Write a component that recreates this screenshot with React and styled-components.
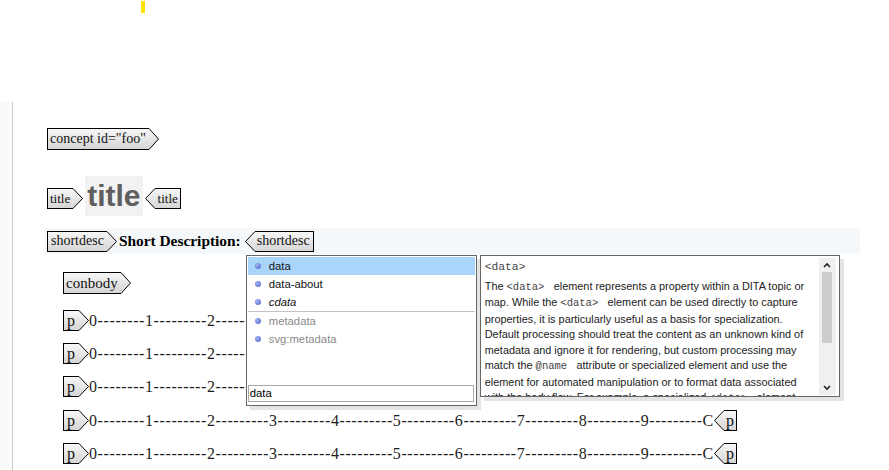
import { useId } from "react";
import styled, { createGlobalStyle } from "styled-components";

const GlobalStyle = createGlobalStyle`
  html, body { margin: 0; padding: 0; background: #fff; }
  body { width: 889px; height: 470px; overflow: hidden; font-family: "Liberation Serif", serif; }
`;

const Page = styled.div`
  display: flex;
  flex-direction: column;
  height: 470px;
`;

const TopArea = styled.div`
  flex: none;
  height: 102px;
`;

const Caret = styled.div`
  margin: 1px 0 0 141px;
  width: 4px;
  height: 12px;
  background: #ffe400;
`;

const Editor = styled.div`
  flex: 1;
  display: flex;
  min-height: 0;
`;

const Gutter = styled.div`
  flex: none;
  width: 12px;
  background: #fafafa;
  border-right: 1px solid #cbcbcb;
`;

const Content = styled.div`
  flex: 1;
  padding: 26px 0 0 32px;
  display: flex;
  flex-direction: column;
`;

const Row = styled.div`
  display: flex;
  align-items: ${(p) => p.$align || "center"};
  padding-left: ${(p) => 2 + (p.$indent || 0)}px;
  margin-top: ${(p) => p.$gap || 0}px;
  height: ${(p) => p.$h}px;
`;

const Band = styled(Row)`
  width: 815px;
  background: #f5f8fb;
  box-sizing: border-box;
`;

const TagWrap = styled.span`
  display: inline-flex;
  flex-direction: ${(p) => (p.$end ? "row-reverse" : "row")};
  height: ${(p) => p.$h}px;
  flex: none;
  margin-bottom: ${(p) => p.$mb || 0}px;
`;

const TagBox = styled.span`
  display: flex;
  align-items: center;
  box-sizing: border-box;
  height: 100%;
  padding: ${(p) => p.$pad};
  border: 1px solid #000;
  ${(p) => (p.$end ? "border-left: none;" : "border-right: none;")}
  background: linear-gradient(to bottom, #f7f7f7, #d5d5d5);
  font-family: "Liberation Serif", serif;
  font-size: ${(p) => p.$fs}px;
  color: #111;
  white-space: nowrap;
`;

function Tag({ children, end, h = 21, fs = 14, pad = "0 3px 0 2px", mb }) {
  const id = useId();
  const mid = h / 2;
  const d = end
    ? `M10 0.5 L0.5 ${mid} L10 ${h - 0.5}`
    : `M0 0.5 L9.5 ${mid} L0 ${h - 0.5}`;
  return (
    <TagWrap $end={end} $h={h} $mb={mb}>
      <TagBox $end={end} $fs={fs} $pad={pad}>
        {children}
      </TagBox>
      <svg width="10" height={h} style={{ display: "block" }}>
        <defs>
          <linearGradient id={id} x1="0" y1="0" x2="0" y2="1">
            <stop offset="0" stopColor="#f7f7f7" />
            <stop offset="1" stopColor="#d5d5d5" />
          </linearGradient>
        </defs>
        <path d={d + " Z"} fill={`url(#${id})`} />
        <path d={d} fill="none" stroke="#000" strokeWidth="1" />
      </svg>
    </TagWrap>
  );
}

const TitleText = styled.span`
  height: 40px;
  line-height: 40px;
  padding: 0 2px;
  margin: 0 2px;
  background: #f2f2f2;
  font-family: "Liberation Sans", sans-serif;
  font-weight: bold;
  font-size: 30px;
  color: #5f5f5f;
`;

const Label = styled.span`
  margin: 0 4px 0 2px;
  font-family: "Liberation Serif", serif;
  font-weight: bold;
  font-size: 15.4px;
  color: #000;
`;

const Anchor = styled.span`
  position: relative;
  display: inline-flex;
`;

const Popups = styled.div`
  position: absolute;
  top: calc(100% + 3px);
  left: 1px;
  display: flex;
  align-items: flex-start;
  gap: 3px;
  z-index: 2;
`;

const ListBox = styled.div`
  width: 231px;
  height: 151px;
  box-sizing: border-box;
  border: 1px solid #666;
  background: #fff;
  box-shadow: 4px 4px 0 #e4e4e4;
  padding: 1px;
  display: flex;
  flex-direction: column;
  font-family: "Liberation Sans", sans-serif;
  font-size: 11.3px;
`;

const Item = styled.div`
  height: 18px;
  display: flex;
  align-items: center;
  padding-left: 7px;
  gap: 8px;
  background: ${(p) => (p.$selected ? "#a9d5fb" : "transparent")};
  color: ${(p) => (p.$dim ? "#8a8a8a" : "#111")};
  font-style: ${(p) => (p.$italic ? "italic" : "normal")};
`;

const Bullet = styled.span`
  width: 6px;
  height: 6px;
  border-radius: 50%;
  background: radial-gradient(circle at 35% 35%, #a3b3f0, #4a60c8);
  flex: none;
`;

const Separator = styled.div`
  height: 1px;
  background: #c2c2c2;
`;

const Filler = styled.div`
  flex: 1;
`;

const FilterInput = styled.div`
  height: 17px;
  box-sizing: border-box;
  margin: 0 1px 2px 0;
  border: 1px solid #a8a8a8;
  padding-left: 1px;
  line-height: 15px;
  color: #000;
`;

const DocBox = styled.div`
  width: 360px;
  height: 142px;
  box-sizing: border-box;
  border: 1px solid #666;
  background: #fff;
  box-shadow: 4px 4px 0 #e4e4e4;
  display: flex;
`;

const DocText = styled.div`
  flex: 1;
  overflow: hidden;
  padding: 4px 0 0 4px;
  font-family: "Liberation Sans", sans-serif;
  font-size: 10.9px;
  color: #222;
`;

const DocTitle = styled.div`
  font-family: "Liberation Mono", monospace;
  font-size: 11.3px;
  color: #444;
  height: 19px;
  line-height: 15px;
`;

const Line = styled.div`
  white-space: nowrap;
  line-height: 15.5px;
`;

const Code = styled.span`
  font-family: "Liberation Mono", monospace;
  font-size: 10.5px;
  color: #444;
  white-space: pre;
`;

const Scrollbar = styled.div`
  flex: none;
  width: 17px;
  margin: 2px 3px 1px 0;
  background: #f0f0f0;
  display: flex;
  flex-direction: column;
  align-items: center;
`;

const Thumb = styled.div`
  width: 10px;
  height: 71px;
  background: #cdcdcd;
`;

const ArrowBtn = styled.div`
  height: 14px;
  display: flex;
  align-items: center;
  justify-content: center;
`;

const PText = styled.span`
  font-family: "Liberation Serif", serif;
  font-size: 16px;
  letter-spacing: 0.6px;
  color: #1d1d1d;
  white-space: nowrap;
`;

const Chevron = ({ up }) => (
  <svg width="8" height="6" viewBox="0 0 8 6">
    <polyline
      points={up ? "1,5 4,2 7,5" : "1,1 4,4 7,1"}
      fill="none"
      stroke="#222"
      strokeWidth="1.6"
    />
  </svg>
);

const ruler =
  "0--------1---------2---------3---------4---------5---------6---------7---------8---------9---------C";

const PRow = ({ gap }) => (
  <Row $indent={16} $gap={gap} $h={21}>
    <Tag fs={16} pad="0 4px 0 3px">p</Tag>
    <PText>{ruler}</PText>
    <Tag end fs={16} pad="0 2px 0 2px">p</Tag>
  </Row>
);

export default function App() {
  return (
    <>
      <GlobalStyle />
      <Page>
        <TopArea>
          <Caret />
        </TopArea>
        <Editor>
          <Gutter />
          <Content>
            <Row $h={22}>
              <Tag h={22} fs={14}>concept id="foo"</Tag>
            </Row>
            <Row $gap={26} $h={40} $align="flex-end">
              <Tag fs={13} mb={7}>title</Tag>
              <TitleText>title</TitleText>
              <Tag end fs={13} mb={7} pad="0 2px 0 3px">title</Tag>
            </Row>
            <Band $gap={12} $h={26}>
              <Tag fs={14} pad="0 3px 0 3px">shortdesc</Tag>
              <Label>Short Description:</Label>
              <Anchor>
                <Tag end fs={14} pad="0 3px 0 2px">shortdesc</Tag>
                <Popups>
                  <ListBox>
                    <Item $selected><Bullet />data</Item>
                    <Item><Bullet />data-about</Item>
                    <Item $italic><Bullet />cdata</Item>
                    <Separator />
                    <Item $dim><Bullet />metadata</Item>
                    <Item $dim><Bullet />svg:metadata</Item>
                    <Filler />
                    <FilterInput>data</FilterInput>
                  </ListBox>
                  <DocBox>
                    <DocText>
                      <DocTitle>&lt;data&gt;</DocTitle>
                      <Line>The <Code>&lt;data&gt; </Code> element represents a property within a DITA topic or</Line>
                      <Line>map. While the <Code>&lt;data&gt; </Code> element can be used directly to capture</Line>
                      <Line>properties, it is particularly useful as a basis for specialization.</Line>
                      <Line>Default processing should treat the content as an unknown kind of</Line>
                      <Line>metadata and ignore it for rendering, but custom processing may</Line>
                      <Line>match the <Code>@name </Code> attribute or specialized element and use the</Line>
                      <Line>element for automated manipulation or to format data associated</Line>
                      <Line>with the body flow. For example, a specialized <Code>&lt;data&gt; </Code> element</Line>
                    </DocText>
                    <Scrollbar>
                      <ArrowBtn><Chevron up /></ArrowBtn>
                      <Thumb />
                      <Filler />
                      <ArrowBtn><Chevron /></ArrowBtn>
                    </Scrollbar>
                  </DocBox>
                </Popups>
              </Anchor>
            </Band>
            <Row $indent={16} $gap={18} $h={22}>
              <Tag h={22} fs={15}>conbody</Tag>
            </Row>
            <PRow gap={16} />
            <PRow gap={12} />
            <PRow gap={12} />
            <PRow gap={13} />
            <PRow gap={12} />
          </Content>
        </Editor>
      </Page>
    </>
  );
}
